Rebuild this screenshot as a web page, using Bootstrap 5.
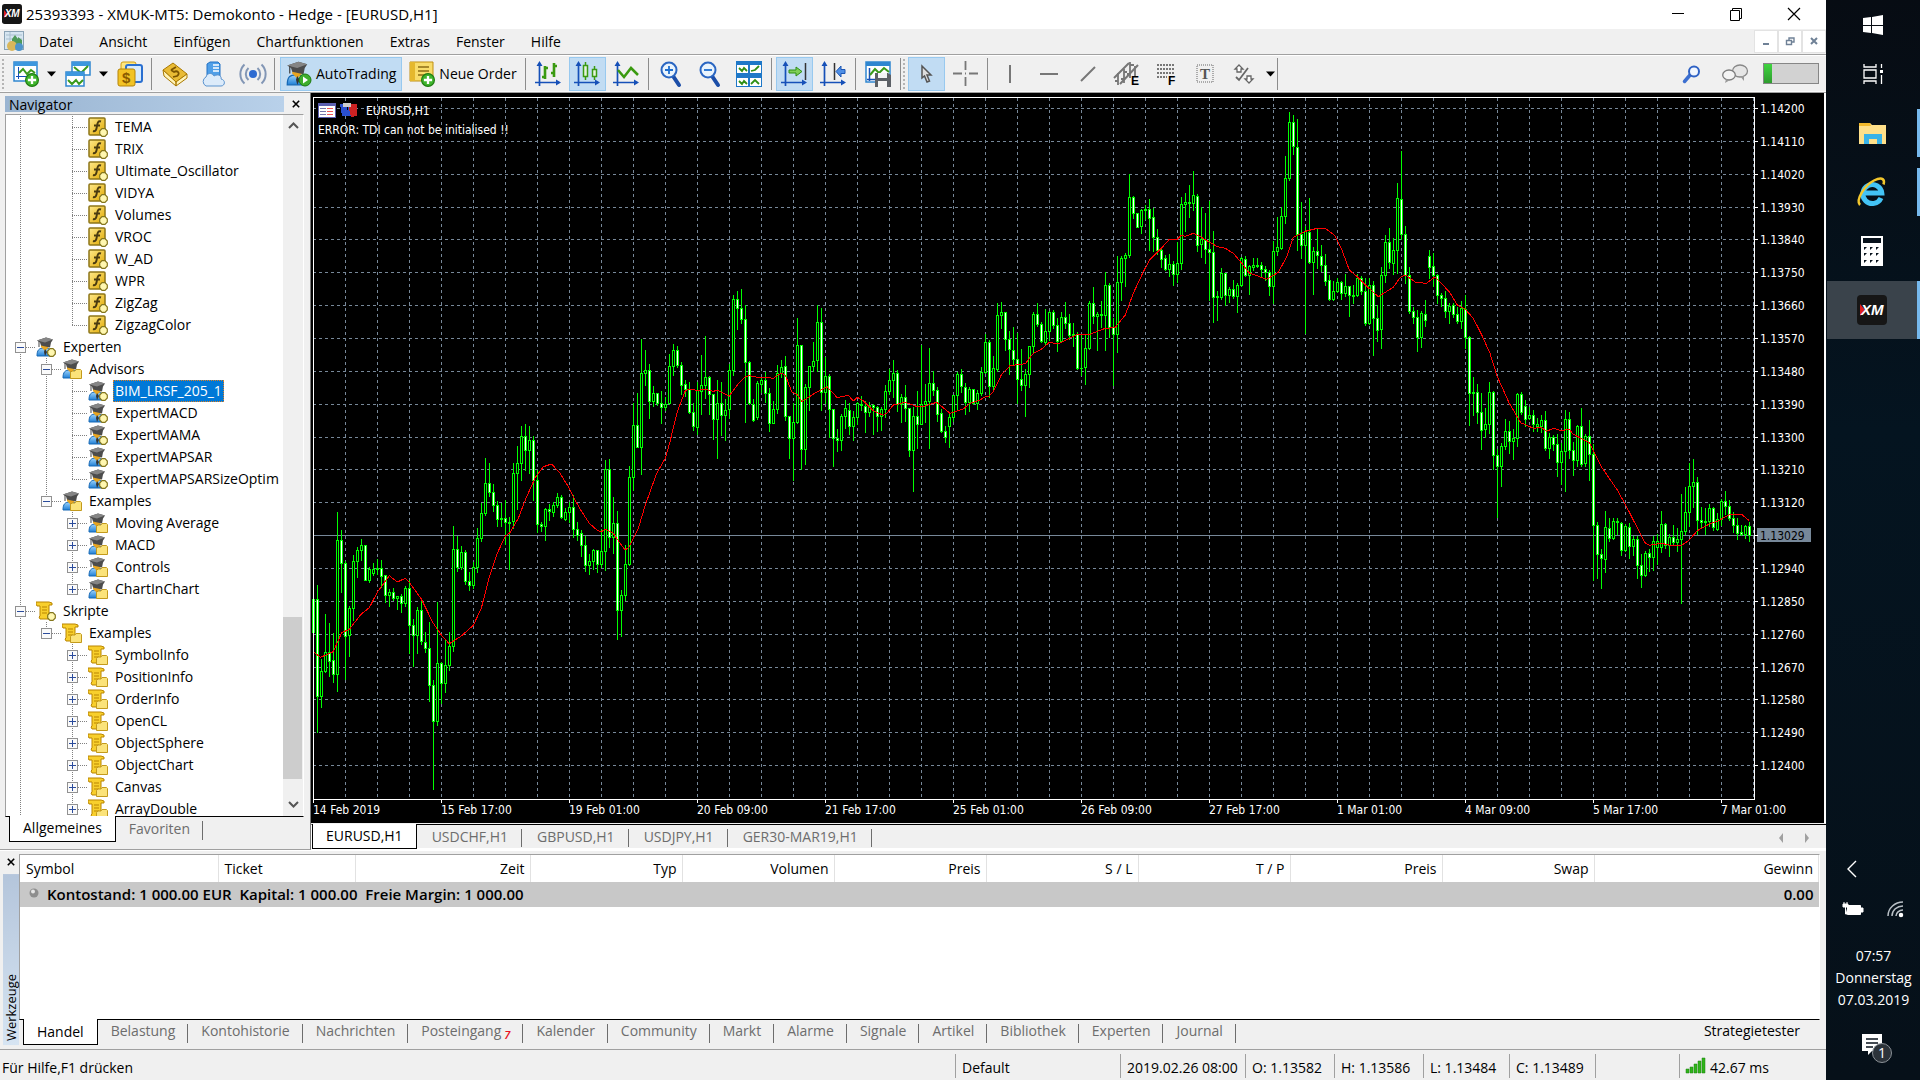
<!DOCTYPE html>
<html lang="de">
<head>
<meta charset="utf-8">
<meta name="viewport" content="width=device-width, initial-scale=1">
<title>25393393 - XMUK-MT5: Demokonto - Hedge - [EURUSD,H1]</title>
<link href="https://cdn.jsdelivr.net/npm/bootstrap@5.3.0/dist/css/bootstrap.min.css" rel="stylesheet">
<style>
:root{--face:#f0f0f0;--edge:#a0a0a0;--dim:#6d6d6d;--hot:#c1dcf3;--hotline:#98c9ef}
body{font-family:"Open Sans","Noto Sans",sans-serif;font-size:14px;line-height:20px;color:#000;background:var(--face);overflow:hidden}
button{font:inherit;color:inherit;background:none;border:0;padding:0}
a{color:inherit;text-decoration:none}
svg{display:block;flex:none;overflow:visible}
.titlebar{height:29px;background:#fff;padding:0 26px 0 2px;font-size:15px}
.titlebar .ctl{width:12px;height:20px;margin-left:46px}
.menubar{height:25px}
.menubar nav{gap:26px;margin-left:14px;padding-top:1px}
.mdi{width:24px;height:23px;background:#fff;border:1px solid #e3e3e3}
.tools{height:39px;padding-top:1px;border-top:1px solid var(--edge);border-bottom:1px solid var(--edge);box-shadow:inset 0 1px #fff,inset 0 -1px #fafafa}
.grip{width:2px;margin:3px 2px;background:repeating-linear-gradient(#b4b4b4 0 2px,transparent 2px 4px)}
.tbtn{width:37px;height:34px;margin:0 1px;display:flex;align-items:center;justify-content:center;border:1px solid transparent;flex:none}
.tbtn.on{background:var(--hot);border-color:var(--hotline)}
.tbtn.wide{width:auto;gap:4px;padding:0 5px}
.tbtn.order{padding:0 4px}
.caret{width:13px;height:34px;flex:none;display:flex;align-items:center;justify-content:center}
.vsep{width:1px;margin:2px 3px 2px 2px;background:#8c8c8c;flex:none}
.meter{width:56px;height:21px;border:1px solid #868686;background:#d2d2d2}
.meter i{display:block;width:8px;height:100%;background:linear-gradient(#3fd43f,#2f9c2f)}
.righttools{padding-right:7px}
.righttools button{margin-right:15px}
.righttools button:first-child{margin-right:21px}
.navpane{width:311px;padding:3px 6px 7px 5px;border-right:1px solid #787878;border-bottom:1px solid var(--edge)}
.cap{height:16px;line-height:18px;padding-left:4px;background:linear-gradient(90deg,#99b4d1,#b9d1ea)}
.xbtn{width:20px;height:16px;display:flex;align-items:center;justify-content:center}
.navpane .xbtn{padding-left:3px}
.treebox{border:1px solid var(--edge);border-right-color:#fff;border-bottom:1px solid #000;background:#fff;margin-top:2px}
.tree{list-style:none;margin:0;padding:1px 0 0 1px;overflow:hidden;white-space:nowrap}
.tree li{display:flex;height:22px;line-height:22px}
.tree li>svg{margin:1px 5px 0 3px}
.tree span.t{padding:0 2px}
.tree li.sel span.t{background:#0078d7;color:#fff;outline:1px dotted #e08020;outline-offset:-1px}
.g{width:26px;height:22px;position:relative;flex:none}
.g.v,.g.tee{background:repeating-linear-gradient(#808080 0 1px,transparent 1px 2px) 13px 0/1px 22px no-repeat}
.g.ell{background:repeating-linear-gradient(#808080 0 1px,transparent 1px 2px) 13px 0/1px 11px no-repeat}
.g.tee::after,.g.ell::after{content:"";position:absolute;left:13px;right:-3px;top:11px;height:1px;background:repeating-linear-gradient(90deg,#808080 0 1px,transparent 1px 2px)}
.g svg{position:absolute;left:8px;top:6px;z-index:1}
.sb{width:20px;background:var(--face);padding:7px 0 8px}
.sb i{background:#cdcdcd;height:162px;margin:0 1px 22px 0}
.tabs{height:25px;gap:0}
.tabs>button{padding:0 13px;line-height:22px;color:var(--dim);position:relative}
.tabs>button:not(.on)::after{content:"";position:absolute;right:0;top:4px;bottom:2px;width:1px;background:#6d6d6d}
.tabs>button.on{background:#fff;color:#000;line-height:24px;border:1px solid #000;border-top:0;margin-top:-1px;z-index:1}
.tabs .tester{line-height:22px;padding-right:20px}
.chartpane{padding:2px 0 0 1px;background:#000;border-right:2px solid #fff}
.chartbox svg{width:100%;height:100%}
.chartbox text{font:12px "DejaVu Sans Condensed","DejaVu Sans",sans-serif;font-stretch:condensed;fill:#fff}
.ctabs{height:26px;border-top:1px solid #000;border-left:1px solid #fff;border-bottom:2px solid #fff;margin-top:1px}
.ctabs>button:not(.on){padding:0 14px 0 15px;line-height:24px}
.dock{height:201px;border-top:1px solid #fff;border-bottom:1px solid var(--edge);padding:3px 6px 4px 3px}
.dock .tabs>button{padding-bottom:3px}
.dock .tabs>button.on{padding:0 13px}
.side{width:17px}
.sidecap{background:linear-gradient(#d6e4f2,#b4c5db);writing-mode:vertical-rl;transform:rotate(180deg);line-height:16px;padding-top:4px;width:16px;font-size:13px}
.trade{table-layout:fixed;margin:0;line-height:20px}
.trade th{font-weight:400;height:27px;padding:1px 5px 0 6px;border-right:1px solid #e2e2e2;text-align:right;background:#fff}
.trade th.s{text-align:left}
.trade td{height:25px;padding:0 5px;background:#c8c8c8;font-weight:600;font-size:15px}
.c1{width:198px}.c2{width:137px}.c3{width:175px}.cx{width:152px}
.tradebox{background:#fff;border:1px solid var(--edge);border-right-color:#fff;border-bottom-color:#000}
.status{height:30px;padding-left:2px;line-height:28px}
.status>span{margin:4px 0 2px;white-space:nowrap;height:24px}
.cell{border-left:1px solid var(--edge);padding-left:6px}
.w84{width:84px}.w86{width:86px}.w89{width:89px}.w125{width:125px}.w165{width:165px}.w147{width:147px}
.taskbar{width:94px;background:linear-gradient(#070c13,#041420 40%,#061019);color:#fff;border-bottom:5px solid #061019;padding:11px 0 0 1px}
.app{width:100%;height:48px;display:flex;align-items:center;justify-content:center;margin-bottom:11px;border-right:3px solid transparent}
.app.sys{height:auto;margin:0;padding:4px 0 25px 2px}
.app.view{padding-bottom:21px}
.app.calc{margin-bottom:6px}
.app.run{border-right-color:#76b9ed}
.app.now{height:58px;background:#3a434b}
.clock{line-height:22px;text-align:center;margin-bottom:22px}
.bell{margin-bottom:10px}
.red7{color:#e81123;font-weight:600;font-style:italic;font-size:11px;line-height:1px;margin-left:3px;vertical-align:-3px}
</style>
</head>
<body>
<svg width="0" height="0" class="position-absolute">
<defs>
<linearGradient id="gy" x1="0" y1="0" x2="1" y2="1"><stop offset="0" stop-color="#ffe98a"/><stop offset="1" stop-color="#e0a800"/></linearGradient>
<linearGradient id="gb" x1="0" y1="0" x2="0" y2="1"><stop offset="0" stop-color="#9fd4fb"/><stop offset="1" stop-color="#1f7fd6"/></linearGradient>
<symbol id="xm" viewBox="0 0 30 30"><rect width="30" height="30" rx="4" fill="#161616"/><path d="M3 9l5 6-5 6z" fill="#e02020"/><text x="4" y="20" font-family="Liberation Sans" font-weight="700" font-style="italic" font-size="15" fill="#fff">XM</text></symbol>
<symbol id="dot" viewBox="0 0 9 9"><path d="M3 .7h3L8.300 3v3L6 8.300H3L.7 6V3z" fill="#fff7b0" stroke="#84761c" stroke-width="1.200"/></symbol>
<symbol id="fold" viewBox="0 0 12 10"><path d="M.5 9.500V3.500L2 2h3l1-1.500h4.500l1 1v8z" fill="#fbe37a" stroke="#c39a1c"/></symbol>
<symbol id="fn" viewBox="0 0 20 20"><rect x="1" y="1" width="16" height="17" rx="1" fill="url(#gy)" stroke="#8d7618" stroke-width="1.500"/><path d="M13 4.500c-3-1-3.500 1.500-4 4.500s-1 6-4 5M6 8.500h6" fill="none" stroke="#4a3b10" stroke-width="1.900"/><use href="#dot" x="11" y="11" width="9" height="9"/></symbol>
<symbol id="man" viewBox="0 0 20 20"><path d="M1 19c0-6 2-8 7-8 6 0 8 2 8 8z" fill="url(#gb)" stroke="#1668b5"/><path d="M5 7h8v3l-4 4-4-4z" fill="#e7a521"/><path d="M9 12l2 3-2 4-1-4z" fill="#333"/><path d="M1 3.500L10 .5l7 2-2 3-1 5-9-2-1-3z" fill="#4c4c4c"/><path d="M1 3.500L10 .5l7 2-8 3z" fill="#858585"/><path d="M3 4v6" stroke="#444"/></symbol>
<symbol id="exp" viewBox="0 0 20 20"><use href="#man" width="20" height="20"/><use href="#dot" x="11" y="11" width="9" height="9"/></symbol>
<symbol id="expf" viewBox="0 0 20 20"><use href="#man" width="20" height="20"/><use href="#fold" x="8" y="10" width="12" height="10"/></symbol>
<symbol id="scr" viewBox="0 0 20 20"><path d="M0 3V1h13l3 1v2h-3v10l1 4H4l-1-2 1-1V5H1z" fill="#f8cf2c" stroke="#b98500"/><path d="M6 6h5M6 9h5M6 12h5" stroke="#b98500"/></symbol>
<symbol id="scrd" viewBox="0 0 20 20"><use href="#scr" width="20" height="20"/><use href="#dot" x="11" y="11" width="9" height="9"/></symbol>
<symbol id="scrf" viewBox="0 0 20 20"><use href="#scr" width="20" height="20"/><use href="#fold" x="8" y="10" width="12" height="10"/></symbol>
<symbol id="plus" viewBox="0 0 11 11"><rect x=".5" y=".5" width="10" height="10" fill="#fafafa" stroke="#919191"/><path d="M2 5.500h7M5.500 2v7" stroke="#2b4c9c"/></symbol>
<symbol id="minus" viewBox="0 0 11 11"><rect x=".5" y=".5" width="10" height="10" fill="#fafafa" stroke="#919191"/><path d="M2 5.500h7" stroke="#2b4c9c"/></symbol>
<symbol id="axes" viewBox="0 0 26 26"><path d="M4.500 25V3M0 21.500h24" stroke="#1650b8" stroke-width="1.700" fill="none"/><path d="M4.500 0l3 5h-6zM26 21.500l-5-3v6z" fill="#1650b8"/></symbol>
<symbol id="down" viewBox="0 0 9 6"><path d="M0 .5h9L4.500 5.500z" fill="#000"/></symbol>
<symbol id="gplus" viewBox="0 0 12 12"><circle cx="6" cy="6" r="5.500" fill="#3fb52c" stroke="#1f7d12"/><path d="M6 2.500v7M2.500 6h7" stroke="#fff" stroke-width="2"/></symbol>
<symbol id="cross" viewBox="0 0 8 8"><path d="M.8.8l6.400 6.400M7.200.8L.8 7.200" stroke="#000" stroke-width="1.600"/></symbol>
</defs></svg>

<div class="d-flex vh-100">
<main class="d-flex flex-column flex-grow-1 overflow-hidden">
  <header class="titlebar d-flex align-items-center">
    <svg width="20" height="20"><use href="#xm"/></svg>
    <span class="ms-1 flex-grow-1">25393393 - XMUK-MT5: Demokonto - Hedge - [EURUSD,H1]</span>
    <button class="ctl" aria-label="Minimieren"><svg width="12" height="20"><path d="M0 9.500h12" stroke="#000"/></svg></button>
    <button class="ctl" aria-label="Wiederherstellen"><svg width="12" height="20"><path d="M.5 6.500h9v10h-9zM2.500 6V4.500h9v10H10" fill="none" stroke="#000"/></svg></button>
    <button class="ctl" aria-label="Schließen"><svg width="12" height="20"><path d="M0 4l12 12M12 4L0 16" stroke="#000" stroke-width="1.200"/></svg></button>
  </header>
  <div class="menubar d-flex align-items-center ps-1">
    <svg width="21" height="21" viewBox="0 0 21 21"><rect x=".5" y=".5" width="19" height="18" fill="#d7e6f1" stroke="#8ba3b5"/><path d="M2 4h16M2 8h16M6 1v16" stroke="#a9bfce"/><path d="M8 15V8l3-4 3 4v7zM14 14V6l4 3v6z" fill="#4e9a58"/><circle cx="8" cy="15" r="5" fill="#d9b65a"/><circle cx="15" cy="16" r="4" fill="#4d94c9"/></svg>
    <nav class="d-flex flex-grow-1" aria-label="Menü"><a href="#">Datei</a><a href="#">Ansicht</a><a href="#">Einfügen</a><a href="#">Chartfunktionen</a><a href="#">Extras</a><a href="#">Fenster</a><a href="#">Hilfe</a></nav>
    <button class="mdi d-flex align-items-center justify-content-center" aria-label="Chart minimieren"><svg width="8" height="10"><path d="M1 8h6" stroke="#6f8196" stroke-width="2"/></svg></button>
    <button class="mdi d-flex align-items-center justify-content-center" aria-label="Chart wiederherstellen"><svg width="9" height="9"><path d="M.5 3.500h5v4h-5zM3 3V1h5v4H6" fill="none" stroke="#6f8196" stroke-width="1.400"/></svg></button>
    <button class="mdi d-flex align-items-center justify-content-center" aria-label="Chart schließen"><svg width="8" height="8"><path d="M1 1l6 6M7 1L1 7" stroke="#6f8196" stroke-width="2"/></svg></button>
  </div>
  <div class="tools d-flex align-items-stretch" role="toolbar" aria-label="Werkzeugleiste">
    <span class="grip"></span>
    <div class="d-flex align-items-center flex-grow-1">
    <button class="tbtn" aria-label="Neuer Chart"><svg width="26" height="26"><path d="M1 1h23v19H1z" fill="#fff" stroke="#2f86cf" stroke-width="1.500"/><path d="M1 1h23v4H1z" fill="#3d97de"/><path d="M5.500 6v12M3 15.500h18" stroke="#1650b8"/><path d="M6 12l4-4 4 5 4-4 4 3" stroke="#3a9a1c" stroke-width="2" fill="none"/><use href="#gplus" x="12" y="12" width="14" height="14"/></svg></button>
    <button class="caret" aria-label="Chartliste"><svg width="9" height="6"><use href="#down"/></svg></button>
    <button class="tbtn" aria-label="Profile"><svg width="26" height="26"><path d="M7 1h18v13H7z" fill="#fff" stroke="#2f86cf" stroke-width="1.500"/><path d="M7 1h18v4H7z" fill="#3d97de"/><path d="M9 6l7 6 7-7" stroke="#3a9a1c" stroke-width="2" fill="none"/><path d="M1 11h18v14H1z" fill="#fff" stroke="#2f86cf" stroke-width="1.500"/><path d="M1 11h18v4H1z" fill="#3d97de"/><path d="M3 19l4 4 4-4 3 4 4-4" stroke="#3a9a1c" stroke-width="2" fill="none"/></svg></button>
    <button class="caret" aria-label="Profilliste"><svg width="9" height="6"><use href="#down"/></svg></button>
    <button class="tbtn" aria-label="Symbole"><svg width="26" height="26"><rect x="4" y="1" width="15" height="18" rx="2" fill="#ffe680" stroke="#d09c10"/><rect x="9" y="4" width="16" height="17" rx="2" fill="#d8ebfc" stroke="#2a6fd0" stroke-width="2"/><rect x="1" y="8" width="17" height="17" rx="2" fill="#f2c325" stroke="#b68408"/><text x="5" y="22" font-family="Liberation Sans" font-weight="700" font-size="15" fill="#8a5c00">$</text></svg></button>
    <span class="vsep align-self-stretch"></span>
    <button class="tbtn" aria-label="Handbuch"><svg width="26" height="26"><path d="M1 9L11 2l14 11-11 8z" fill="#e9bb35" stroke="#a97800"/><path d="M1 9l1 6 12 10v-4zM14 21l11-8v4l-11 8z" fill="#fff3b8" stroke="#a97800"/><path d="M9 9l5-3M9 9l3 2c3-2 7 1 3 4l-4 1" fill="none" stroke="#7b5400" stroke-width="1.800"/></svg></button>
    <button class="tbtn" aria-label="Cloud"><svg width="26" height="26"><path d="M6 3l3-2h8l2 2v14H6z" fill="#4f9fe8" stroke="#2573c4"/><path d="M12 4h6M12 7h6M12 10h6" stroke="#fff" stroke-width="1.500"/><path d="M5 25a5 5 0 010-9c1-4 6-5 8-1 5-3 8 1 7 3 5 1 4 7 0 7z" fill="#dcebfa" stroke="#5b93cf"/></svg></button>
    <button class="tbtn" aria-label="Signale"><svg width="28" height="26" fill="none" stroke="#8296b5" stroke-width="2"><circle cx="14" cy="13" r="3" fill="#2d6bd1" stroke="#2d6bd1"/><path d="M9.500 7a8 8 0 000 12M18.500 7a8 8 0 010 12M5.500 3.500a13 13 0 000 19M22.500 3.500a13 13 0 010 19"/></svg></button>
    <span class="vsep align-self-stretch me-1"></span>
    <button class="tbtn wide on"><svg width="26" height="26"><use href="#man" width="25" height="25"/><circle cx="19" cy="19" r="6" fill="#3fae2c" stroke="#1d7a10"/><path d="M17 15.500l5 3.500-5 3.500z" fill="#fff"/></svg>AutoTrading</button>
    <button class="tbtn wide order"><svg width="26" height="26"><path d="M1 1h23v19H1z" fill="#f8dc6a" stroke="#c08f10"/><path d="M1 1h5v19H1z" fill="#e5b82e"/><path d="M9 6h11M9 10h11M9 14h8" stroke="#8c6c14" stroke-width="1.500"/><use href="#gplus" x="12" y="12" width="14" height="14"/></svg>Neue Order</button>
    <span class="vsep align-self-stretch"></span>
    <button class="tbtn" aria-label="Balkenchart"><svg width="26" height="26"><use href="#axes"/><path d="M10 5v13M7 16h3M10 7h3M19 2v14M16 12h3M19 5h3" stroke="#3a9a10" stroke-width="2.600"/></svg></button>
    <button class="tbtn on" aria-label="Kerzenchart"><svg width="26" height="26"><use href="#axes"/><path d="M11.500 1v18M20.500 5v14" stroke="#3a9a10" stroke-width="1.500"/><path d="M9.500 4.500h4v11h-4zM18.500 8.500h4v7h-4z" fill="#e4f4dc" stroke="#3a9a10" stroke-width="1.500"/></svg></button>
    <button class="tbtn" aria-label="Linienchart"><svg width="26" height="26"><use href="#axes"/><path d="M5 9l6 7 7-9 7 7" stroke="#3a9a10" stroke-width="2.500" fill="none"/></svg></button>
    <span class="vsep align-self-stretch"></span>
    <button class="tbtn" aria-label="Vergrößern"><svg width="22" height="26"><path d="M13 15l6 9" stroke="#1c4ea8" stroke-width="4" stroke-linecap="round"/><circle cx="9" cy="9" r="7.500" fill="#eaf4fd" stroke="#2a66c2" stroke-width="2"/><path d="M9 5v8M5 9h8" stroke="#1f6fd0" stroke-width="1.800"/></svg></button>
    <button class="tbtn" aria-label="Verkleinern"><svg width="22" height="26"><path d="M13 15l6 9" stroke="#1c4ea8" stroke-width="4" stroke-linecap="round"/><circle cx="9" cy="9" r="7.500" fill="#eaf4fd" stroke="#2a66c2" stroke-width="2"/><path d="M5 9h8" stroke="#1f6fd0" stroke-width="1.800"/></svg></button>
    <button class="tbtn" aria-label="Kacheln"><svg width="26" height="26"><path d="M0 0h26v26H0z" fill="#1e78c8"/><path d="M1 4h11v8H1zM14 4h11v8H14zM1 17h11v8H1zM14 17h11v8H14z" fill="#fff"/><path d="M3 7l3 3 2-3 3 3M15 10l4-1 4-4M3 20l3 3 2-3 3 3M15 23l4-4 4 4" stroke="#2f8f14" stroke-width="1.800" fill="none"/></svg></button>
    <span class="vsep align-self-stretch"></span>
    <button class="tbtn on" aria-label="Auto-Scroll"><svg width="26" height="26"><use href="#axes"/><path d="M24.500 2v17" stroke="#333" stroke-width="1.500"/><path d="M8 9h7V6l6 4.500-6 4.500v-3H8z" fill="#7fce58" stroke="#2f8f14"/></svg></button>
    <button class="tbtn" aria-label="Chart verschieben"><svg width="26" height="26"><use href="#axes"/><path d="M14.500 2v17" stroke="#333" stroke-width="1.500"/><path d="M25 8.500h-4V5l-5 5.500 5 5.500v-3.500h4z" fill="#4f8fe6" stroke="#1c56b4"/></svg></button>
    <span class="vsep align-self-stretch"></span>
    <button class="tbtn" aria-label="Vorlagen"><svg width="26" height="26"><path d="M1 1h24v20H1z" fill="#fff" stroke="#2f86cf" stroke-width="1.500"/><path d="M1 1h24v4H1z" fill="#2f86d0"/><path d="M4.500 7v13M2 18.500h8" stroke="#1650b8" stroke-width="1.500"/><path d="M5 14l5-6 4 4 5-5 5 4" stroke="#3a9a1c" stroke-width="2" fill="none"/><path d="M10 12h13l3 2v12H10z" fill="#5c6066"/><path d="M13 12h9v5h-9zM13 20h9v6h-9z" fill="#f4f4f4"/></svg></button>
    <span class="vsep align-self-stretch me-0"></span><span class="grip align-self-stretch"></span>
    <button class="tbtn on" aria-label="Zeiger"><svg width="12" height="18"><path d="M2 1v12l2.500-2 2.500 6 2.500-1L7 10h4z" fill="#ddd" stroke="#555" stroke-width="1.500"/></svg></button>
    <button class="tbtn" aria-label="Fadenkreuz"><svg width="25" height="25"><path d="M12.500 0v9M12.500 16v9M0 12.500h9M16 12.500h9M12 12.500h1" stroke="#777" stroke-width="1.800"/></svg></button>
    <span class="vsep align-self-stretch"></span>
    <button class="tbtn" aria-label="Vertikale Linie"><svg width="4" height="18"><path d="M2 0v18" stroke="#777" stroke-width="2"/></svg></button>
    <button class="tbtn" aria-label="Horizontale Linie"><svg width="18" height="4"><path d="M0 2h18" stroke="#777" stroke-width="2"/></svg></button>
    <button class="tbtn" aria-label="Trendlinie"><svg width="16" height="16"><path d="M1 15L15 1" stroke="#777" stroke-width="2"/></svg></button>
    <button class="tbtn" aria-label="Kanal"><svg width="26" height="26" fill="none" stroke="#777" stroke-width="2"><path d="M0 17L15 2M6 23L24 4"/><path d="M4 12v12M1 20h3M10 8v14M7 18h3M10 11h3M16 1v16M16 4h4M21 5v10M13 13h3" stroke-width="1.800"/><text x="17" y="24" font-family="Liberation Sans" font-weight="700" font-size="12" fill="#000" stroke="none">E</text></svg></button>
    <button class="tbtn" aria-label="Fibonacci"><svg width="20" height="26" fill="none"><path d="M1 4h18M1 8h18M1 12h18M1 16h10" stroke="#777" stroke-width="1.800" stroke-dasharray="2 1"/><text x="12" y="24" font-family="Liberation Sans" font-weight="700" font-size="12" fill="#000">F</text></svg></button>
    <button class="tbtn" aria-label="Text"><svg width="18" height="20"><rect x="1" y="1" width="16" height="17" fill="none" stroke="#666" stroke-dasharray="1 1"/><text x="4" y="15" font-family="Liberation Serif" font-weight="700" font-size="15" fill="#555">T</text></svg></button>
    <button class="tbtn" aria-label="Objekte"><svg width="20" height="20" fill="#fff" stroke="#666" stroke-width="1.300"><path d="M5 1l4 4H7v3H3V5H1zM15 19l-4-4h2v-3h4v3h2z"/><path d="M2 13l3 3 9-12" fill="none" stroke-width="1.800"/></svg></button>
    <button class="caret" aria-label="Objektliste"><svg width="9" height="6"><use href="#down"/></svg></button>
    <span class="vsep align-self-stretch ms-0"></span>
    </div>
    <div class="righttools d-flex align-items-center">
      <button aria-label="Suche"><svg width="18" height="18"><path d="M1.500 16.500l6-7" stroke="#3c6fd0" stroke-width="3.500" stroke-linecap="round"/><circle cx="11" cy="6.500" r="5" fill="#f2f7ff" stroke="#2f62c4" stroke-width="2"/></svg></button>
      <button aria-label="Chat"><svg width="26" height="20"><ellipse cx="18" cy="7" rx="7.500" ry="6" fill="#e6e6e6" stroke="#888" stroke-width="1.300"/><path d="M18 12l4 5v-5z" fill="#999"/><ellipse cx="7" cy="11" rx="6.300" ry="5" fill="#f4f4f4" stroke="#7d7d7d" stroke-width="1.300"/><path d="M4 15l-1 4 5-3z" fill="#999"/></svg></button>
      <div class="meter"><i></i></div>
    </div>
  </div>

  <div class="d-flex flex-grow-1 overflow-hidden">
    <section class="navpane d-flex flex-column flex-shrink-0">
      <div class="d-flex"><div class="cap flex-grow-1">Navigator</div><button class="xbtn" aria-label="Navigator schließen"><svg width="8" height="8"><use href="#cross"/></svg></button></div>
      <div class="treebox d-flex flex-grow-1 overflow-hidden">
        <ul class="tree flex-grow-1" id="tree"></ul>
        <div class="sb d-flex flex-column align-items-center flex-shrink-0">
          <svg width="11" height="7"><path d="M1 6l4.500-4.500L10 6" fill="none" stroke="#555" stroke-width="2"/></svg>
          <i class="mt-auto align-self-stretch"></i>
          <svg width="11" height="7"><path d="M1 1l4.500 4.500L10 1" fill="none" stroke="#555" stroke-width="2"/></svg>
        </div>
      </div>
      <div class="tabs d-flex ps-1"><button class="on">Allgemeines</button><button>Favoriten</button></div>
    </section>
    <section class="d-flex flex-column flex-grow-1 overflow-hidden">
      <div class="chartpane flex-grow-1 overflow-hidden"><div class="chartbox h-100" id="chart"></div></div>
      <div class="ctabs tabs d-flex align-items-start"><button class="on">EURUSD,H1</button><button>USDCHF,H1</button><button>GBPUSD,H1</button><button>USDJPY,H1</button><button>GER30-MAR19,H1</button>
        <svg class="ms-auto me-3 mt-2" width="32" height="10"><path d="M5 0v10L1 5zM27 0v10l4-5z" fill="#a0a0a0"/></svg></div>
    </section>
  </div>

  <section class="dock d-flex">
    <div class="side d-flex flex-column align-items-start"><button class="xbtn w-100 mb-1" aria-label="Werkzeuge schließen"><svg width="8" height="8"><use href="#cross"/></svg></button><div class="sidecap flex-grow-1">Werkzeuge</div></div>
    <div class="d-flex flex-column flex-grow-1">
      <div class="tradebox flex-grow-1">
        <table class="trade w-100"><colgroup><col class="c1"><col class="c2"><col class="c3"><col class="cx"><col class="cx"><col class="cx"><col class="cx"><col class="cx"><col class="cx"><col class="cx"><col></colgroup>
        <thead><tr><th class="s">Symbol</th><th class="s">Ticket</th><th>Zeit</th><th>Typ</th><th>Volumen</th><th>Preis</th><th>S / L</th><th>T / P</th><th>Preis</th><th>Swap</th><th>Gewinn</th></tr></thead>
        <tbody><tr><td colspan="10"><div class="d-flex align-items-center"><svg class="ms-1 me-2" width="10" height="10"><circle cx="5" cy="4" r="4.500" fill="#8e8e8e"/><circle cx="4" cy="2.500" r="2" fill="#e6e6e6"/></svg><span>Kontostand: 1 000.00 EUR&nbsp; Kapital: 1 000.00&nbsp; Freie Margin: 1 000.00</span></div></td><td class="text-end">0.00</td></tr></tbody></table>
      </div>
      <div class="tabs d-flex ps-1"><button class="on">Handel</button><button>Belastung</button><button>Kontohistorie</button><button>Nachrichten</button><button>Posteingang<span class="red7">7</span></button><button>Kalender</button><button>Community</button><button>Markt</button><button>Alarme</button><button>Signale</button><button>Artikel</button><button>Bibliothek</button><button>Experten</button><button>Journal</button><span class="tester ms-auto">Strategietester</span></div>
    </div>
  </section>
  <footer class="status d-flex">
    <span class="flex-grow-1">Für Hilfe,F1 drücken</span>
    <span class="cell w165">Default</span><span class="cell w125">2019.02.26 08:00</span><span class="cell w89">O: 1.13582</span><span class="cell w89">H: 1.13586</span><span class="cell w86">L: 1.13484</span><span class="cell w86">C: 1.13489</span><span class="cell w84"></span>
    <span class="cell w147 d-flex"><svg class="me-1 mt-1" width="20" height="15"><path d="M0 11h3v4H0zM4 9h3v6H4zM8 6h3v9H8zM12 3h3v12h-3zM16 0h3v15h-3z" fill="#2fb51a" stroke="#1c7f10" stroke-width=".5"/></svg>42.67 ms</span>
  </footer>
</main>

<aside class="taskbar d-flex flex-column align-items-center flex-shrink-0">
  <button class="app sys" aria-label="Start"><svg width="20" height="20"><path d="M0 3l8-1v8H0zM9 2l11-2v10H9zM0 11h8v7l-8-1zM9 11h11v9L9 18z" fill="#fff"/></svg></button>
  <button class="app sys view" aria-label="Taskansicht"><svg width="20" height="20" fill="none" stroke="#fff" stroke-width="1.300"><path d="M1 0v3h12V0M1 20v-3h12v3M1 6h12v8H1zM18.500 0v4M18.500 11v9"/><path d="M17 6h3v3h-3z" fill="#fff" stroke="none"/></svg></button>
  <button class="app run mt-1" aria-label="Explorer"><svg width="27" height="23"><path d="M0 22V1h11l2 2h14v19z" fill="#ffe08a"/><path d="M0 1h11l1 3H0z" fill="#f2b92c"/><path d="M5 22V12h18v10h-5v-5h-8v5z" fill="#39b3e8"/></svg></button>
  <button class="app run" aria-label="Internet Explorer"><svg width="30" height="30" fill="none"><path d="M24 21a9.500 9.500 0 11.800-5H8" stroke="#43c3f5" stroke-width="5"/><path d="M3 28C-2 23 8 8 17 3.500s11-.5 9.500 4" stroke="#f3c72c" stroke-width="2.500"/></svg></button>
  <button class="app calc" aria-label="Rechner"><svg width="22" height="30"><path d="M0 0h22v30H0z" fill="#fff"/><path d="M2 2h18v5H2zM3 11h3l-3 3zM9 11h3l-3 3zM15 11h3l-3 3zM3 17h3l-3 3zM9 17h3l-3 3zM15 17h3l-3 3zM3 24h3l-3 3zM9 24h3l-3 3zM15 24h3l-3 3z" fill="#07111b"/></svg></button>
  <button class="app run now mb-auto" aria-label="XM MT5"><svg width="30" height="30"><use href="#xm"/></svg></button>
  <button class="align-self-start ms-3 ps-1 mb-4" aria-label="Ausgeblendete Symbole"><svg width="10" height="16"><path d="M9 0L1 8l8 8" fill="none" stroke="#fff" stroke-width="1.400"/></svg></button>
  <div class="d-flex gap-4 mb-4 pb-1"><svg width="20" height="16"><path d="M4.500 4.500h13v9h-13z" fill="#fff" stroke="#fff"/><path d="M18 7h2v4h-2zM1 1v2M4 1v2M0 3h5v3H0zM2.500 6v7h2" fill="#fff" stroke="#fff"/></svg><svg width="17" height="16" fill="none" stroke="#b9c0c6" stroke-width="1.500"><path d="M1 15C1 7 8 1 16 1M5 15c0-6 5-10 11-10M9 15c0-3 3-6 7-6"/><circle cx="14" cy="14" r="1.500" fill="#fff" stroke="#fff"/></svg></div>
  <div class="clock">07:57<br>Donnerstag<br>07.03.2019</div>
  <button class="bell ps-1" aria-label="Benachrichtigungen"><svg width="32" height="32"><path d="M2 1h20v17H12l-4 4v-4H2z" fill="#fff"/><path d="M6 6h12M6 10h12M6 14h7" stroke="#07111b" stroke-width="1.500"/><circle cx="22" cy="20" r="9.500" fill="#2c333a" stroke="#8b9197"/><text x="18" y="25" font-family="Open Sans" font-size="14" fill="#fff">1</text></svg></button>
</aside>
</div>

<script src="https://cdn.jsdelivr.net/npm/bootstrap@5.3.0/dist/js/bootstrap.bundle.min.js"></script>
<script>
/* Navigator tree: guide cells (i line, t tee, l corner, + / - box on a tee, m box on a corner, . blank), icon, label */
const rows = [
...['TEMA','TRIX','Ultimate_Oscillator','VIDYA','Volumes','VROC','W_AD','WPR','ZigZag'].map(n=>['i.t','fn',n]),
['i.l','fn','ZigzagColor'],['-','exp','Experten'],['i-','expf','Advisors'],
['iit','exp','BIM_LRSF_205_1',1],['iit','exp','ExpertMACD'],['iit','exp','ExpertMAMA'],['iit','exp','ExpertMAPSAR'],['iil','exp','ExpertMAPSARSizeOptim'],
['im','expf','Examples'],['i.+','expf','Moving Average'],['i.+','expf','MACD'],['i.+','expf','Controls'],['i.p','expf','ChartInChart'],
['-','scrd','Skripte'],['im','scrf','Examples'],
...['SymbolInfo','PositionInfo','OrderInfo','OpenCL','ObjectSphere','ObjectChart','Canvas','ArrayDouble'].map(n=>['i.+','scrf',n])];
const cls = {i:'v',t:'tee',l:'ell','+':'tee','-':'tee',m:'ell',p:'ell','.':''};
const box = {'+':'plus',p:'plus','-':'minus',m:'minus'};
document.getElementById('tree').innerHTML = rows.map(([g,ic,t,s])=>`<li${s?' class="sel"':''}>`+
 [...g].map(c=>`<span class="g ${cls[c]}">${box[c]?`<svg width="11" height="11"><use href="#${box[c]}"/></svg>`:''}</span>`).join('')+
 `<svg width="20" height="20"><use href="#${ic}"/></svg><span class="t">${t}</span></li>`).join('');

/* Candles: direction, high, body top, body bottom, low, in thirds of a pixel below each block's base line */
const blocks = [
[405,`u297 298 398 398,d255 297 590 698,u478 514 590 623,u342 457 515 518,d369 457 485 530,d400 481 524 548,u38 121 524 575,d90 121 190 276,d185 190 410 538,u318 325 406 470,u165 185 325 360,u141 151 185 233,u117 136 151 180,d135 136 240 242,u202 208 240 248,u190 208 221 226,u178 205 209 222,d180 205 230 262,d225 226 287 308,u267 277 287 320,d265 277 296 301,u288 289 296 327,d284 289 311 338,u258 265 311 318,d240 265 376 461,d358 376 406 498,u322 331 406 459,d297 331 425 433,d396 427 445 458,d366 445 556 605,d541 556 664 869,u306 490 664 677,d486 490 550 611,u420 497 550 578,u396 439 497 512,u78 148 439 455,d108 148 202 213,u138 157 202 207,d150 157 244 254,d216 244 256 272,u188 203 256 266,u86 116 203 218,u10 40 116 123,u-126 -50 40 46,d-110 -50 -24 -10,d-48 -24 15 33,d4 15 57 78,d10 54 58 78,d0 54 66 132,d52 66 69 207,u-110 -80 64 85,u-160 -110 -80 27,u-222 -190 -110 -60,d-228 -190 -150 -90,u-222 -180 -150 -80,d-190 -180 -60 0,d-90 -60 73 97,d66 73 78 95,u25 28 79 122,d12 28 33 62,u8 15 36 50,u-20 -8 16 22,d-15 -8 52 56,u25 38 58 60,u8 22 38 68,d-15 22 87 112,d68 88 105 122,d90 100 136 170,d110 136 196 214,u163 184 196 223,u148 151 184 208,d150 151 193 217`],
[165,`u808 875 913 923,u600 628 875 930,d597 628 832 861,u711 790 832 879,d753 790 1052 1137,u990 1006 1052 1128,u855 913 1006 1020,u618 652 913 915,u430 496 652 690,d399 496 562 563,u237 340 562 642,u272 331 341 375,d312 331 425 476,u380 400 425 438,d399 400 430 437,d393 430 442 489,u412 432 442 450,u282 319 431 434,u252 271 319 345,d258 271 316 321,d307 316 376 402,d361 373 388 410,d366 388 458 459,d430 458 500 512,u366 391 502 524,u285 376 393 464,u228 352 376 414,d348 352 404 462,d402 403 479 537,u361 430 479 594,d366 430 466 525,u417 451 466 540,u312 331 448 476,u105 118 331 345,d93 118 146 207,d87 145 179 189,d135 178 307 486,d303 307 431 433,d418 433 482 483,u364 370 472 477,u355 361 374 397,d337 361 400 426,d384 400 491 513,u423 448 490 491,u315 340 448 459,u300 322 339 351,d288 319 470 480,d468 469 536 594,u430 487 536 660,u174 256 487 491,d255 256 569 628,u374 382 569 612,u318 319 382 450,u247 304 319 333,u136 187 301 333,d144 187 398 450,u291 349 398 430,d343 349 448 532,d447 448 536 618,d509 535 542 573,u462 469 542 572,u420 445 469 506,d430 451 500 522,u453 472 500 540,u427 430 472 492,d408 432 436 450,d423 439 458 516,u426 436 458 468,d432 436 443 522,d438 442 470 513,u441 448 470 510,u375 394 448 473,u327 361 394 404,u300 340 361 412,d330 340 432 453,u403 412 432 486,d375 412 445 484,d444 445 571 588,u441 469 572 693,d393 469 493 564,u256 433 493 494,u373 424 433 486,u264 370 424 564,d334 370 391 406,d381 391 463 484,d447 460 514 518,d499 514 532 546,u456 472 499 561,u405 406 472 484,u337 343 406 448,d327 343 380 397,d369 382 428 462,u382 388 428 453,d387 388 430 432,u390 400 430 447,u321 337 400 405,u222 247 337 340,d240 247 380 412,u288 325 380 390,u129 166 328 334,u126 157 166 204,d156 157 238 270,d213 238 268 342,d201 271 298 314,d219 298 358 430,d267 358 376 390,u327 343 376 468,u259 260 343 381,u156 163 260 276,d129 163 193 198,d186 193 244 248,u147 214 248 256,u153 157 214 240,d150 157 196 204,d175 196 244 275`],
[5,`u636 652 725 727,d606 652 671 684,d642 671 707 718,d669 703 707 738,d697 703 806 808,d703 804 806 827,u703 745 802 852,u603 610 745 749,d561 610 650 669,u637 643 650 750,u603 643 646 682,u517 556 646 750,d551 556 682 711,d655 682 704 856,u468 547 704 756,u470 475 547 600,u460 466 475 558,u222 292 466 473,d288 292 340 354,d339 340 382 383,u327 331 380 400,u315 328 331 357,d297 328 356 450,d325 352 412 453,d388 412 452 462,d447 451 478 501,d466 475 508 510,u462 493 508 528,d484 493 523 555,u427 490 523 546,u291 313 490 507,u279 307 313 393,d255 307 310 351,u213 286 310 330,d282 289 436 453,u322 418 433 471,d339 420 448 489,d303 448 458 600,d393 457 592 666,u573 588 592 660,u505 520 592 597,d519 520 586 615,u561 568 586 606,d540 568 590 594,u550 556 590 636,u472 475 556 558,d468 478 526 530,u495 499 526 582,u474 496 502 510,u474 495 498 503,d487 496 508 531,d498 508 517 540,d510 517 560 585,u424 454 560 610,u351 442 454 465,u321 349 445 448,u168 235 349 369,u36 67 235 240,d45 67 140 162,d57 142 403 450,d306 403 436 474,u378 395 436 700,d294 397 488 490,u441 454 488 582,d385 454 466 504,d435 469 496 513,d462 496 545 555,d525 541 598 600,u543 574 598 600,u534 547 574 578,d543 547 580 597,u522 559 580 588,d558 559 587 648,d556 586 590 609,u522 535 586 588,d528 535 575 582,d534 574 670 675,u534 556 670 672,d543 556 656 765,d615 655 692 723,u502 526 688 744,u405 427 526 546,d385 427 488 504,u414 451 490 522,u249 295 451 519,d153 298 403 418,d378 403 526 549,d501 526 634 641,d621 634 652 671,d630 652 713 753,u633 640 713 741,d600 643 662 678,d450 469 502 534,d459 499 526 558,d522 526 586 609,d579 586 595 618,d573 595 634 651,u609 619 634 671,d610 616 644 651,d621 643 665 671`],
[185,`u63 85 125 144,d45 88 172 204,d170 172 340 435,d291 337 340 405,d312 337 398 429,d340 397 452 507,u384 433 448 473,u306 337 433 460,d334 337 527 567,d508 526 560 713,u490 499 560 618,u417 454 499 507,d423 454 485 519,u447 475 485 537,u340 343 475 498,d336 343 398 402,d360 379 418 440,u381 406 416 417,d390 406 434 453,u414 433 440 453,u405 421 440 456,d393 421 506 512,u459 472 506 536,d465 472 493 510,d462 493 548 588,u490 514 548 612,u390 418 514 633,d396 418 511 534,d487 511 542 585,u436 439 542 558,d384 439 553 560,u462 469 550 560,d420 469 523 600,d493 523 736 900,d726 736 823 894,d808 823 836 924,u693 742 838 876,d714 745 776 785,u714 724 776 779,u714 724 727 762,d727 730 812 825,u733 739 812 815,d730 742 800 834,u768 778 800 827,d768 778 856 894,d823 856 887 921,u814 820 887 888,d807 820 833 873,u768 784 832 872,u763 784 802 852,u693 733 802 816,d729 733 796 804,u762 772 796 830,d735 772 788 795,u745 778 788 815,u642 754 779 969,u621 697 754 762,u549 619 697 740,u537 607 619 682,d591 607 721 762,d681 721 727 741,u684 724 728 762,u673 685 724 738,d682 685 742 750,u699 718 748 750,u658 664 718 735,d633 664 679 703,d661 679 715 720,d697 715 736 756,d714 736 760 777,d736 757 763 765,u736 739 763 775,d727 739 766 785`]];
/* Moving average: x offset, base line, then x y pairs in thirds of a pixel */
const avg = [
[-2,405,'12 457 32 472 70 455 95 398 118 388 154 342 178 323 202 277 238 227 262 246 286 235 298 247 334 297 370 370 394 405 418 431 454 408 490 376 514 325 538 230 562 160 586 108 600 98 625 55 646 0 675 -66 700 -100 725 -108 750 -80 775 -40 795 0 812 30 838 70 862 91'],
[288,165,'4 815 16 808 40 820 60 850 76 870 88 860 115 805 136 735 170 640 196 595 210 545 232 455 256 392 268 388 292 391 316 388 340 394 352 391 388 408 412 375 436 350 448 347 472 352 496 352 520 355 544 339 556 345 575 395 592 404 606 425 620 415 652 395 682 381 712 413 745 406 760 423 772 412 790 422 820 452 850 466 862 458 880 435 916 427 952 440 976 438 1010 427 1050 460 1090 447 1110 430 1140 420 1156 410 1168 408 1180 395 1204 345 1230 317 1276 311 1300 280 1315 272'],
[728,5,'4 748 28 727 55 732 88 715 112 703 150 703 196 685 225 683 256 645 280 580 310 515 330 478 364 445 388 418 412 418 424 406 436 409 460 400 484 412 532 440 556 445 580 460 604 488 628 519 680 538 715 517 740 470 760 412 796 394 832 385 856 385 885 407 904 445 928 510 952 530 976 555 1015 590 1036 577 1060 562 1080 533 1096 525 1130 549 1144 546 1156 552 1185 531 1228 575 1252 615'],
[1088,185,'196 88 220 115 244 162 270 220 292 290 328 370 362 428 400 445 424 442 440 454 460 445 484 452 508 448 520 463 568 488 604 560 652 630 676 673 700 720 735 788 748 796 784 790 820 798 844 797 868 780 892 752 928 732 952 724 988 704 1024 702 1048 722']];
const times = ['14 Feb 2019','15 Feb 17:00','19 Feb 01:00','20 Feb 09:00','21 Feb 17:00','25 Feb 01:00','26 Feb 09:00','27 Feb 17:00','1 Mar 01:00','4 Mar 09:00','5 Mar 17:00','7 Mar 01:00'];
const host = document.getElementById('chart');
function drawChart(){
  const W = host.clientWidth, H = host.clientHeight, R = W-70, B = H-24, L = R-1441;
  let grid='', lab='', lime='', white='', black='';
  for(let k=1;k<=45;k++) grid+=`M${L+32*k+.5} 3V${B}`;
  for(let k=0;k<=20;k++){
    const y = Math.round(13+k*32.86);
    if(y>=B) break;
    if(k!==13){ grid+=`M${L} ${y+.5}H${R}`; lab+=`<text x="${R+6}" y="${y+5}">${(1.142-k*.0009).toFixed(5)}</text>`; }
    lab+=`<path d="M${R} ${y+.5}h4" stroke="#fff"/>`;
  }
  times.forEach((t,k)=>{ const x = k?L+128*k:L; lab+=`<path d="M${x+.5} ${B}v4" stroke="#fff"/><text x="${x}" y="${B+15}">${t}</text>`; });
  let i=0;
  for(const [base,s] of blocks) for(const c of s.split(',')){
    const [h,a,b,l] = c.slice(1).split(' ').map(v=>base+Math.floor(v/3)), x = L+4*i++;
    lime+=`M${x} ${h}h1V${l+1}h-1zM${x-1} ${a}h3V${b+1}h-3z`;
    if(b-a>1){ const p=`M${x} ${a+1}h1V${b}h-1z`; c[0]==='d'?white+=p:black+=p; }
  }
  const ma = avg.flatMap(([ox,base,s])=>{ const v=s.split(' ').map(Number), o=[]; for(let j=0;j<v.length;j+=2) o.push((L+ox-1+v[j]/3).toFixed(1)+','+(base+v[j+1]/3).toFixed(1)); return o; }).join(' ');
  host.innerHTML=`<svg shape-rendering="crispEdges"><path d="${grid}" stroke="#778899" stroke-dasharray="3 3" fill="none"/>
  <path d="M${L} 440.500H${R}" stroke="#778899"/>
  <path d="${lime}" fill="#0f0"/><path d="${white}" fill="#fff"/><path d="${black}" fill="#000"/>
  <polyline points="${ma}" fill="none" stroke="#f00"/>
  <path d="M${L+.5} ${B+.5}V2.500H${R+.5}V${B+.5}z" fill="none" stroke="#fff"/>
  <rect x="${R+3}" y="433" width="54" height="14" fill="#778899"/>${lab}<text class="now" x="${R+6}" y="445" style="fill:#000">1.13029</text>
  <rect x="6" y="8" width="17" height="14" fill="#fff" stroke="#5b5fb0"/><path d="M6 9h17" stroke="#5b5fb0" stroke-width="3"/><path d="M8 13h6M8 16h6M8 19h6" stroke="#77a"/><path d="M15 13h6M15 16h6M15 19h6" stroke="#e55"/>
  <path d="M28 9h7l1 12h-6zM36 12h9v9h-9z" fill="#2a4fd0"/><path d="M36 9h9v12l-6 1z" fill="#c22"/><path d="M31 8h8v4h-8z" fill="#ccc"/>
  <text x="54" y="20">EURUSD,H1</text><text x="6" y="39">ERROR: TDI can not be initialised !!</text></svg>`;
}
drawChart();
addEventListener('resize',drawChart);
</script>
</body>
</html>
